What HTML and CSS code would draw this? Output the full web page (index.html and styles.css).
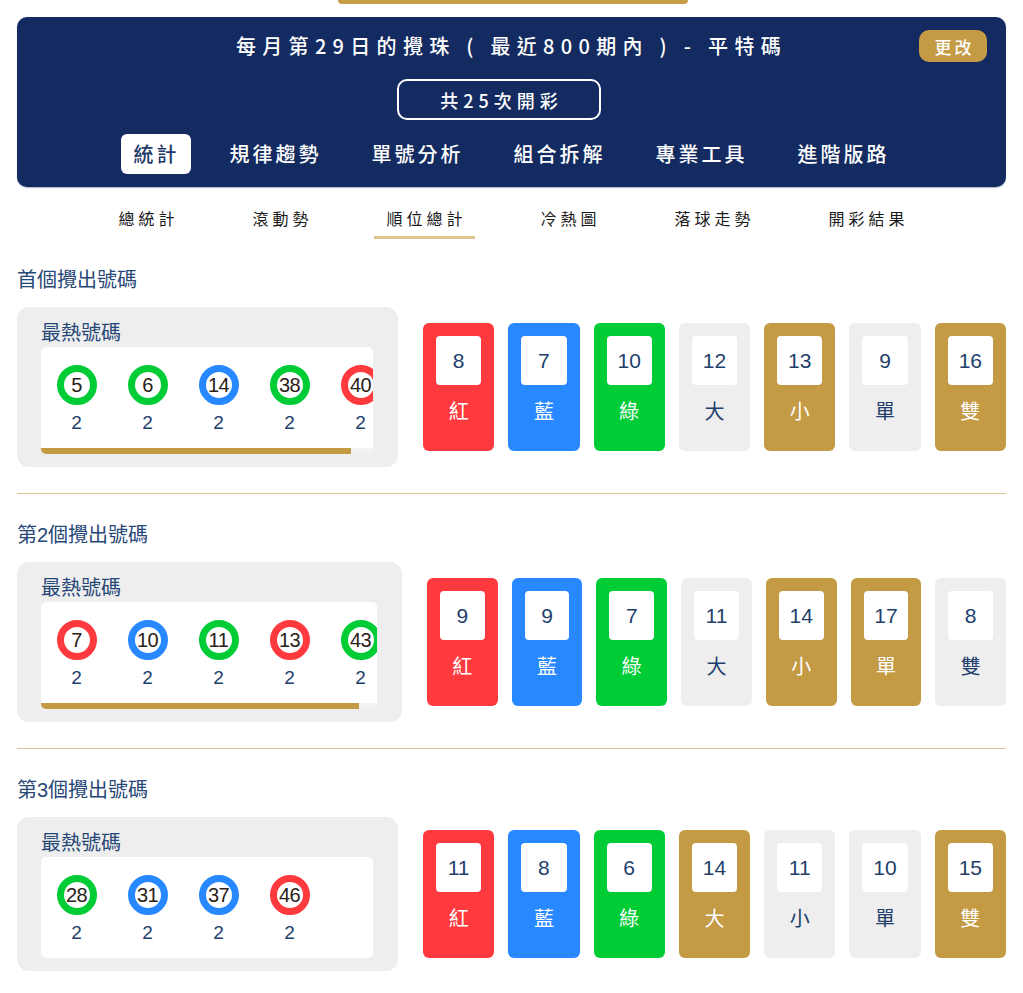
FILE: index.html
```html
<!DOCTYPE html>
<html lang="zh-Hant">
<head>
<meta charset="utf-8">
<title>順位總計</title>
<link rel="stylesheet" href="styles.css">
</head>
<body>
<div class="page">
  <div class="topbar"></div>
  <header class="hero">
    <div class="hero-title-row">
      <span class="hero-spacer"></span>
      <h1 class="hero-title">每月第29日的攪珠 ( 最近800期內 ) - 平特碼</h1>
      <button class="change-btn">更改</button>
    </div>
    <div class="count-row"><div class="count-btn">共25次開彩</div></div>
    <nav class="main-tabs">
      <a class="main-tab active">統計</a>
      <a class="main-tab">規律趨勢</a>
      <a class="main-tab">單號分析</a>
      <a class="main-tab">組合拆解</a>
      <a class="main-tab">專業工具</a>
      <a class="main-tab">進階版路</a>
    </nav>
  </header>

  <nav class="sub-tabs">
    <a class="sub-tab">總統計</a>
    <a class="sub-tab">滾動勢</a>
    <a class="sub-tab active">順位總計</a>
    <a class="sub-tab">冷熱圖</a>
    <a class="sub-tab">落球走勢</a>
    <a class="sub-tab">開彩結果</a>
  </nav>

  <section class="pos-block first">
    <h2 class="pos-title">首個攪出號碼</h2>
    <div class="pos-row">
      <div class="hot-panel">
        <div class="hot-title">最熱號碼</div>
        <div class="hot-box">
          <div class="hot-viewport">
            <div class="hot-list">
              <div class="hot-item"><span class="ball green">5</span><span class="hot-count">2</span></div>
              <div class="hot-item"><span class="ball green">6</span><span class="hot-count">2</span></div>
              <div class="hot-item"><span class="ball blue">14</span><span class="hot-count">2</span></div>
              <div class="hot-item"><span class="ball green">38</span><span class="hot-count">2</span></div>
              <div class="hot-item"><span class="ball red">40</span><span class="hot-count">2</span></div>
            </div>
          </div>
          <div class="hot-bar"><div class="hot-thumb" style="width: 93.4%"></div></div>
        </div>
      </div>
      <div class="tiles">
        <div class="tile red"><span class="tile-num">8</span><span class="tile-label">紅</span></div>
        <div class="tile blue"><span class="tile-num">7</span><span class="tile-label">藍</span></div>
        <div class="tile green"><span class="tile-num">10</span><span class="tile-label">綠</span></div>
        <div class="tile gray"><span class="tile-num">12</span><span class="tile-label">大</span></div>
        <div class="tile gold"><span class="tile-num">13</span><span class="tile-label">小</span></div>
        <div class="tile gray"><span class="tile-num">9</span><span class="tile-label">單</span></div>
        <div class="tile gold"><span class="tile-num">16</span><span class="tile-label">雙</span></div>
      </div>
    </div>
  </section>

  <section class="pos-block">
    <h2 class="pos-title">第2個攪出號碼</h2>
    <div class="pos-row">
      <div class="hot-panel wide">
        <div class="hot-title">最熱號碼</div>
        <div class="hot-box">
          <div class="hot-viewport">
            <div class="hot-list">
              <div class="hot-item"><span class="ball red">7</span><span class="hot-count">2</span></div>
              <div class="hot-item"><span class="ball blue">10</span><span class="hot-count">2</span></div>
              <div class="hot-item"><span class="ball green">11</span><span class="hot-count">2</span></div>
              <div class="hot-item"><span class="ball red">13</span><span class="hot-count">2</span></div>
              <div class="hot-item"><span class="ball green">43</span><span class="hot-count">2</span></div>
            </div>
          </div>
          <div class="hot-bar"><div class="hot-thumb" style="width: 94.6%"></div></div>
        </div>
      </div>
      <div class="tiles">
        <div class="tile red"><span class="tile-num">9</span><span class="tile-label">紅</span></div>
        <div class="tile blue"><span class="tile-num">9</span><span class="tile-label">藍</span></div>
        <div class="tile green"><span class="tile-num">7</span><span class="tile-label">綠</span></div>
        <div class="tile gray"><span class="tile-num">11</span><span class="tile-label">大</span></div>
        <div class="tile gold"><span class="tile-num">14</span><span class="tile-label">小</span></div>
        <div class="tile gold"><span class="tile-num">17</span><span class="tile-label">單</span></div>
        <div class="tile gray"><span class="tile-num">8</span><span class="tile-label">雙</span></div>
      </div>
    </div>
  </section>

  <section class="pos-block last">
    <h2 class="pos-title">第3個攪出號碼</h2>
    <div class="pos-row">
      <div class="hot-panel">
        <div class="hot-title">最熱號碼</div>
        <div class="hot-box">
          <div class="hot-viewport">
            <div class="hot-list">
              <div class="hot-item"><span class="ball green">28</span><span class="hot-count">2</span></div>
              <div class="hot-item"><span class="ball blue">31</span><span class="hot-count">2</span></div>
              <div class="hot-item"><span class="ball blue">37</span><span class="hot-count">2</span></div>
              <div class="hot-item"><span class="ball red">46</span><span class="hot-count">2</span></div>
            </div>
          </div>
        </div>
      </div>
      <div class="tiles">
        <div class="tile red"><span class="tile-num">11</span><span class="tile-label">紅</span></div>
        <div class="tile blue"><span class="tile-num">8</span><span class="tile-label">藍</span></div>
        <div class="tile green"><span class="tile-num">6</span><span class="tile-label">綠</span></div>
        <div class="tile gold"><span class="tile-num">14</span><span class="tile-label">大</span></div>
        <div class="tile gray"><span class="tile-num">11</span><span class="tile-label">小</span></div>
        <div class="tile gray"><span class="tile-num">10</span><span class="tile-label">單</span></div>
        <div class="tile gold"><span class="tile-num">15</span><span class="tile-label">雙</span></div>
      </div>
    </div>
  </section>
</div>
</body>
</html>
```

FILE: styles.css
```css
* { box-sizing: border-box; }

body {
  margin: 0;
  background: #ffffff;
  font-family: "Liberation Sans", "Noto Sans CJK TC", sans-serif;
  color: #223f6c;
}

.page {
  padding: 0 17px;
}

.topbar {
  width: 350px;
  height: 4px;
  margin: 0 auto 13px;
  position: relative;
  left: 1px;
  background: #c79d48;
  border-radius: 0 0 10px 10px;
}

/* ---------- header ---------- */
.hero {
  background: #132b60;
  border-radius: 10px;
  padding: 13px 19px 13px;
  box-shadow: 0 1px 1px rgba(19, 43, 96, 0.35);
}

.hero-title-row {
  display: grid;
  grid-template-columns: 1fr auto 1fr;
  align-items: center;
  height: 32px;
}

.hero-title {
  margin: 0;
  font-family: "Noto Sans CJK TC", sans-serif;
  font-size: 20px;
  font-weight: 500;
  letter-spacing: 6.3px;
  color: #ffffff;
  white-space: pre;
  line-height: 32px;
}

.change-btn {
  justify-self: end;
  width: 68px;
  height: 32px;
  border: 0;
  border-radius: 10px;
  background: #c49a45;
  color: #ffffff;
  font-family: "Noto Sans CJK TC", sans-serif;
  font-size: 17px;
  font-weight: 500;
  letter-spacing: 3px;
  padding: 0 0 0 3px;
}

.count-row {
  display: flex;
  justify-content: center;
  margin-top: 17px;
}

.count-btn {
  width: 204px;
  height: 41px;
  margin-right: 25px;
  border: 2px solid #ffffff;
  border-radius: 10px;
  color: #ffffff;
  font-family: "Noto Sans CJK TC", sans-serif;
  font-size: 18px;
  font-weight: 500;
  letter-spacing: 5px;
  display: flex;
  align-items: center;
  justify-content: center;
  padding-left: 5px;
}

.main-tabs {
  display: flex;
  justify-content: center;
  gap: 26px;
  margin-top: 14px;
  padding-right: 2px;
}

.main-tab {
  height: 40px;
  padding: 0 11px 0 13px;
  border-radius: 6px;
  color: #ffffff;
  font-family: "Noto Sans CJK TC", sans-serif;
  font-size: 20px;
  font-weight: 500;
  letter-spacing: 3px;
  line-height: 40px;
}

.main-tab.active {
  background: #ffffff;
  color: #1d3a6a;
}

/* ---------- sub tabs ---------- */
.sub-tabs {
  display: flex;
  justify-content: center;
  gap: 54px;
  margin-top: 13px;
}

.sub-tab {
  padding: 6px 8px 6px 12px;
  line-height: 24px;
  font-family: "Noto Sans CJK TC", sans-serif;
  font-size: 16px;
  letter-spacing: 4px;
  color: #1a1a1a;
  border-bottom: 3px solid transparent;
}

.sub-tab.active {
  border-bottom-color: #dcc48f;
}

/* ---------- position blocks ---------- */
.pos-block {
  padding-top: 27px;
  padding-bottom: 26px;
  border-bottom: 1px solid #dcc393;
}

.pos-block.last {
  border-bottom: 0;
}

.pos-title {
  margin: 0 0 13px;
  font-size: 20px;
  font-weight: 400;
  line-height: 28px;
  color: #274776;
}

.pos-row {
  display: flex;
  align-items: center;
  gap: 25px;
}

.hot-panel {
  flex: none;
  width: 381px;
  background: #eeeeee;
  border-radius: 12px;
  padding: 13px 25px 13px 24px;
}

.hot-panel.wide {
  width: 385px;
}

.hot-title {
  font-size: 20px;
  line-height: 27px;
  color: #274776;
}

.hot-box {
  background: #ffffff;
  border-radius: 5px;
  overflow: hidden;
}

.hot-viewport {
  overflow: hidden;
}

.hot-list {
  display: flex;
  padding: 18px 0 13px;
}

.hot-bar {
  height: 6px;
  background: #f2f2f2;
}

.hot-thumb {
  height: 100%;
  background: #c49a45;
}

.hot-item {
  flex: none;
  width: 71px;
  display: flex;
  flex-direction: column;
  align-items: center;
  gap: 6px;
}

.ball {
  width: 40px;
  height: 40px;
  border-radius: 50%;
  border: 7px solid #00cc33;
  background: #ffffff;
  display: flex;
  align-items: center;
  justify-content: center;
  font-size: 20px;
  color: #2a2118;
  letter-spacing: -0.5px;
}

.ball.green { border-color: #00cc36; }
.ball.blue { border-color: #2788ff; }
.ball.red { border-color: #ff3a3e; }

.hot-count {
  font-size: 19px;
  line-height: 24px;
  color: #223f6c;
}

/* ---------- tiles ---------- */
.tiles {
  flex: 1;
  display: flex;
  gap: 14px;
}

.tile {
  flex: 1;
  height: 128px;
  border-radius: 6px;
  padding: 13px;
  display: flex;
  flex-direction: column;
  align-items: stretch;
}

.tile.red { background: #ff3a3e; }
.tile.blue { background: #2788ff; }
.tile.green { background: #00cc36; }
.tile.gold { background: #c49a45; }
.tile.gray { background: #eeeeee; }

.tile-num {
  height: 49px;
  background: #ffffff;
  border-radius: 4px;
  display: flex;
  align-items: center;
  justify-content: center;
  font-size: 21px;
  color: #223f6c;
}

.tile-label {
  margin-top: 12px;
  line-height: 28px;
  text-align: center;
  font-family: "Noto Sans CJK TC", sans-serif;
  font-size: 20px;
  color: #ffffff;
}

.tile.gray .tile-label {
  color: #223f6c;
}
```
